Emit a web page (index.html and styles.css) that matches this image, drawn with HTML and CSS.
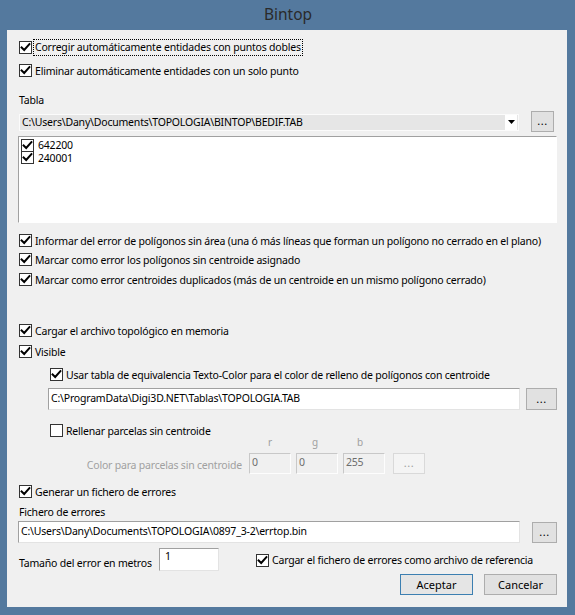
FILE: index.html
```html
<!DOCTYPE html>
<html lang="es">
<head>
<meta charset="utf-8">
<title>Bintop</title>
<link rel="stylesheet" href="styles.css">
</head>
<body>
<div class="window">
  <div class="titlebar">Bintop</div>
  <div class="client">
    <div class="row chk r1"><span class="cb on"><svg viewBox="0 0 11 11"><path d="M1.6 5.4 L4.2 8 L9.4 2.2"/></svg></span><span class="lbl focus">Corregir automáticamente entidades con puntos dobles</span></div>
    <div class="row chk r2"><span class="cb on"><svg viewBox="0 0 11 11"><path d="M1.6 5.4 L4.2 8 L9.4 2.2"/></svg></span><span class="lbl">Eliminar automáticamente entidades con un solo punto</span></div>
    <div class="row label tabla">Tabla</div>
    <div class="row combo-row">
      <div class="combo"><span class="combo-text">C:\Users\Dany\Documents\TOPOLOGIA\BINTOP\BEDIF.TAB</span><span class="combo-arrow"><svg viewBox="0 0 7 4"><path d="M0 0 H7 L3.5 4 Z"/></svg></span></div>
      <div class="btn dots dots1">...</div>
    </div>
    <div class="list">
      <div class="item"><span class="cb on"><svg viewBox="0 0 11 11"><path d="M1.6 5.4 L4.2 8 L9.4 2.2"/></svg></span><span class="item-text">642200</span></div>
      <div class="item"><span class="cb on"><svg viewBox="0 0 11 11"><path d="M1.6 5.4 L4.2 8 L9.4 2.2"/></svg></span><span class="item-text">240001</span></div>
    </div>
    <div class="row chk r-inf"><span class="cb on"><svg viewBox="0 0 11 11"><path d="M1.6 5.4 L4.2 8 L9.4 2.2"/></svg></span><span class="lbl">Informar del error de polígonos sin área (una ó más líneas que forman un polígono no cerrado en el plano)</span></div>
    <div class="row chk r-m1"><span class="cb on"><svg viewBox="0 0 11 11"><path d="M1.6 5.4 L4.2 8 L9.4 2.2"/></svg></span><span class="lbl">Marcar como error los polígonos sin centroide asignado</span></div>
    <div class="row chk r-m2"><span class="cb on"><svg viewBox="0 0 11 11"><path d="M1.6 5.4 L4.2 8 L9.4 2.2"/></svg></span><span class="lbl">Marcar como error centroides duplicados (más de un centroide en un mismo polígono cerrado)</span></div>
    <div class="row chk r-car"><span class="cb on"><svg viewBox="0 0 11 11"><path d="M1.6 5.4 L4.2 8 L9.4 2.2"/></svg></span><span class="lbl">Cargar el archivo topológico en memoria</span></div>
    <div class="row chk r-vis"><span class="cb on"><svg viewBox="0 0 11 11"><path d="M1.6 5.4 L4.2 8 L9.4 2.2"/></svg></span><span class="lbl">Visible</span></div>
    <div class="row chk r-usar indent"><span class="cb on"><svg viewBox="0 0 11 11"><path d="M1.6 5.4 L4.2 8 L9.4 2.2"/></svg></span><span class="lbl">Usar tabla de equivalencia Texto-Color para el color de relleno de polígonos con centroide</span></div>
    <div class="row tb-row tb-row2">
      <div class="textbox tb2">C:\ProgramData\Digi3D.NET\Tablas\TOPOLOGIA.TAB</div>
      <div class="btn dots dots2">...</div>
    </div>
    <div class="row chk r-rel indent"><span class="cb"></span><span class="lbl">Rellenar parcelas sin centroide</span></div>
    <div class="row rgb-row">
      <span class="rgb r">r</span><span class="rgb g">g</span><span class="rgb b">b</span>
    </div>
    <div class="row color-row">
      <span class="dis-label">Color para parcelas sin centroide</span>
      <div class="textbox disabled cbox">0</div>
      <div class="textbox disabled cbox">0</div>
      <div class="textbox disabled cbox">255</div>
      <div class="btn dots disabled-btn">...</div>
    </div>
    <div class="row chk r-gen"><span class="cb on"><svg viewBox="0 0 11 11"><path d="M1.6 5.4 L4.2 8 L9.4 2.2"/></svg></span><span class="lbl">Generar un fichero de errores</span></div>
    <div class="row label fichero">Fichero de errores</div>
    <div class="row tb-row tb-row3">
      <div class="textbox tb3">C:\Users\Dany\Documents\TOPOLOGIA\0897_3-2\errtop.bin</div>
      <div class="btn dots dots3">...</div>
    </div>
    <div class="row tam-row">
      <span class="tam-label">Tamaño del error en metros</span>
      <div class="textbox tb-num">1</div>
      <div class="ref-chk"><span class="cb on"><svg viewBox="0 0 11 11"><path d="M1.6 5.4 L4.2 8 L9.4 2.2"/></svg></span><span class="lbl">Cargar el fichero de errores como archivo de referencia</span></div>
    </div>
    <div class="row btn-row">
      <div class="btn main default">Aceptar</div>
      <div class="btn main">Cancelar</div>
    </div>
  </div>
</div>
</body>
</html>
```

FILE: styles.css
```css
* { box-sizing: border-box; }
body {
  margin: 0;
  background: #54799e;
  font-family: "Noto Sans", "Open Sans", sans-serif;
  font-size: 10.5px;
  letter-spacing: -0.2px;
  color: #000;
}
.window {
  width: 575px;
  height: 615px;
  display: flex;
  flex-direction: column;
}
.titlebar {
  height: 30px;
  display: flex;
  align-items: center;
  justify-content: center;
  font-size: 15.5px;
  letter-spacing: 0;
  color: #2a2a2a;
  padding-bottom: 2px;
  padding-left: 1px;
}
.client {
  margin-left: 7px;
  width: 560px;
  height: 577px;
  background: #f0f0f0;
  padding: 0 10px 0 12px;
  display: flex;
  flex-direction: column;
}
.row {
  display: flex;
  align-items: center;
  flex: none;
}
.chk { height: 17px; }
.indent { padding-left: 31px; }
.cb {
  width: 13px;
  height: 13px;
  border: 1px solid #333;
  background: #fff;
  flex: none;
  margin-right: 3px;
  display: flex;
  align-items: center;
  justify-content: center;
}
.cb svg { width: 11px; height: 11px; display: block; }
.cb path { fill: none; stroke: #000; stroke-width: 2; stroke-linecap: square; }
.lbl { white-space: nowrap; }
.focus { outline: 1px dotted #000; outline-offset: 0; padding: 0 1px; margin-left: -1px; line-height: 15px; }

.r1 { margin-top: 9px; }
.r2 { margin-top: 6px; }
.label { height: 17px; }
.tabla { margin-top: 12px; }
.combo-row { margin-top: 3px; height: 21px; justify-content: space-between; }
.combo {
  width: 500px;
  height: 17px;
  background: #e6e6e6;
  border: 1px solid #fbfbfb;
  display: flex;
  align-items: center;
  margin-top: 1px;
}
.combo-text { flex: 1; padding-left: 2px; white-space: nowrap; }
.combo-arrow {
  width: 12px;
  height: 15px;
  background: #fff;
  display: flex;
  align-items: center;
  justify-content: center;
  margin-right: 1px;
}
.combo-arrow svg { width: 7px; height: 4px; display: block; }
.btn {
  display: flex;
  align-items: center;
  justify-content: center;
  background: #e1e1e1;
  border: 1px solid #adadad;
  flex: none;
}
.dots { font-size: 11px; letter-spacing: 0.5px; padding-bottom: 2px; }
.dots1 { width: 23px; height: 21px; margin-right: 3px; }
.list {
  margin-top: 4px;
  margin-left: -1px;
  width: 539px;
  height: 87px;
  background: #fff;
  border-top: 1px solid #a0a0a0;
  border-left: 1px solid #a0a0a0;
  border-right: 1px solid #fff;
  border-bottom: 1px solid #fff;
  padding: 2px 0 0 2px;
  flex: none;
}
.item { height: 12.5px; display: flex; align-items: center; overflow: visible; }
.item .cb { margin-right: 4px; }
.item-text { line-height: 12px; display: block; height: 12px; }

.r-inf { margin-top: 9px; }
.r-m1 { margin-top: 2px; }
.r-m2 { margin-top: 3px; }
.r-car { margin-top: 34px; }
.r-vis { margin-top: 4px; }
.r-usar { margin-top: 6px; }

.textbox {
  background: #fff;
  border-top: 1px solid #a0a0a0;
  border-left: 1px solid #a0a0a0;
  border-right: 1px solid #e3e3e3;
  border-bottom: 1px solid #e3e3e3;
  padding: 2px 0 0 2px;
  white-space: nowrap;
  flex: none;
}
.tb-row { height: 23px; align-items: flex-start; }
.tb-row2 { margin-top: 4px; }
.tb2 { margin-left: 29px; width: 472px; height: 22px; margin-top: 1px; }
.dots2 { width: 31px; height: 22px; margin-left: auto; margin-top: 1px; }

.r-rel { margin-top: 13px; height: 15px; }
.rgb-row { height: 10px; position: relative; color: #a0a0a0; font-size: 10px; }
.rgb { position: absolute; top: -3px; }
.rgb.r { left: 249px; }
.rgb.g { left: 293px; }
.rgb.b { left: 338px; }
.color-row { margin-top: 5px; height: 21px; align-items: stretch; }
.dis-label {
  width: 223px;
  text-align: right;
  color: #a0a0a0;
  align-self: flex-end;
  line-height: 15px;
  padding-bottom: 1px;
  white-space: nowrap;
}
.disabled {
  background: #f0f0f0;
  color: #6d6d6d;
  border-top-color: #c8c8c8;
  border-left-color: #c8c8c8;
  border-right-color: #fdfdfd;
  border-bottom-color: #fdfdfd;
  padding-top: 1px;
}
.cbox { width: 42px; margin-left: 7px; }
.cbox + .cbox { margin-left: 5px; }
.disabled-btn {
  width: 32px;
  margin-left: 8px;
  background: #f4f4f4;
  border-color: #d9d9d9;
  color: #a0a0a0;
}

.r-gen { margin-top: 9px; }
.fichero { margin-top: 3px; }
.tb3 { margin-left: -1px; width: 502px; height: 22px; margin-top: 1px; }
.dots3 { width: 25px; height: 21px; margin-left: auto; margin-top: 2px; }

.tam-row { margin-top: 5px; height: 23px; align-items: flex-start; }
.tam-label { margin-top: 8px; width: 140px; white-space: nowrap; }
.tb-num { width: 60px; height: 23px; padding: 0 0 0 5px; }
.ref-chk { display: flex; align-items: center; margin-left: 37px; margin-top: 5px; }

.btn-row { margin-top: 3px; height: 21px; justify-content: flex-end; }
.main { width: 73px; height: 21px; font-size: 11px; letter-spacing: 0; }
.main + .main { margin-left: 11px; }
.default { border-color: #3c7fb1; background: #e5e5e5; }
```
